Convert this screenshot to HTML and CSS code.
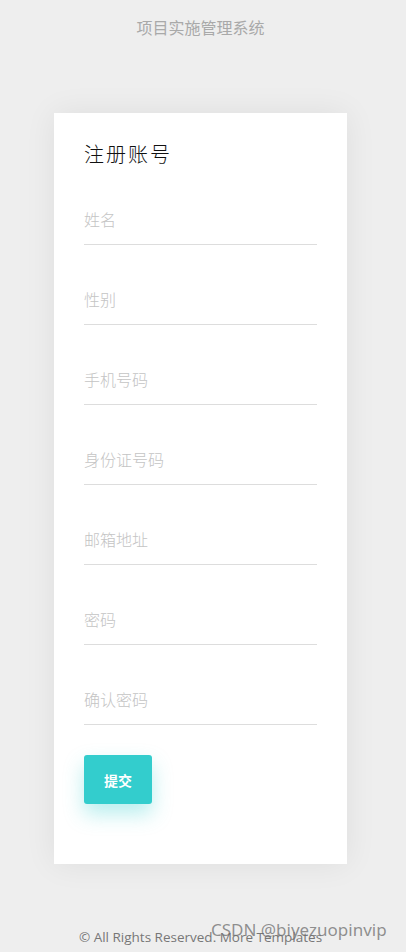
FILE: index.html
```html
<!DOCTYPE html>
<html lang="zh">
<head>
<meta charset="utf-8">
<title>项目实施管理系统</title>
<link rel="stylesheet" href="styles.css">
</head>
<body>
<div class="page">
  <header class="site-title">项目实施管理系统</header>
  <main class="card">
    <h2 class="card-title">注册账号</h2>
    <form class="form">
      <input class="field" type="text" placeholder="姓名">
      <input class="field" type="text" placeholder="性别">
      <input class="field" type="text" placeholder="手机号码">
      <input class="field" type="text" placeholder="身份证号码">
      <input class="field" type="text" placeholder="邮箱地址">
      <input class="field" type="password" placeholder="密码">
      <input class="field" type="password" placeholder="确认密码">
      <button class="submit" type="button">提交</button>
    </form>
  </main>
  <footer class="footer">© All Rights Reserved. More Templates</footer>
</div>
<div class="watermark">CSDN @biyezuopinvip</div>
</body>
</html>
```

FILE: styles.css
```css
html, body {
  margin: 0;
  padding: 0;
  background: #eeeeee;
  height: 952px;
  overflow: hidden;
}
body {
  position: relative;
  font-family: "Noto Sans CJK SC", "Open Sans", sans-serif;
}
.page {
  width: 401px;
  padding-top: 16px;
}
.site-title {
  text-align: center;
  font-size: 16px;
  line-height: 22px;
  color: #a9a9a9;
}
.card {
  margin: 75px 0 0 54px;
  width: 293px;
  box-sizing: border-box;
  padding: 27px 30px 60px;
  background: #fff;
  box-shadow: 0 0 30px rgba(0, 0, 0, 0.07);
}
.card-title {
  margin: 0;
  font-size: 20px;
  letter-spacing: 2px;
  line-height: 28px;
  font-weight: 300;
  color: #111;
}
.form {
  display: flex;
  flex-direction: column;
  align-items: flex-start;
  padding-top: 32px;
  gap: 35px;
}
.field {
  display: block;
  width: 233px;
  height: 45px;
  box-sizing: border-box;
  margin: 0;
  padding: 0 0 6px;
  border: none;
  border-bottom: 1px solid #dddddd;
  outline: none;
  background: transparent;
  font-family: "Noto Sans CJK SC", sans-serif;
  font-size: 16px;
  font-weight: 300;
  color: #333;
}
.field::placeholder {
  color: #c4c4c4;
}
.submit {
  margin-top: -5px;
  width: 68px;
  height: 49px;
  border: none;
  border-radius: 3px;
  background: #33cdcd;
  color: #fff;
  font-family: "Noto Sans CJK SC", sans-serif;
  font-size: 14px;
  font-weight: 700;
  box-shadow: 0 10px 20px rgba(51, 205, 205, 0.35);
  cursor: pointer;
}
.footer {
  margin-top: 63px;
  text-align: center;
  font-family: "Open Sans", sans-serif;
  font-size: 13.5px;
  line-height: 20px;
  color: #777;
}
.watermark {
  position: absolute;
  left: 211px;
  top: 918px;
  font-family: "Noto Sans", sans-serif;
  font-size: 17px;
  line-height: 24px;
  color: rgba(110, 110, 110, 0.75);
  white-space: nowrap;
}
```
